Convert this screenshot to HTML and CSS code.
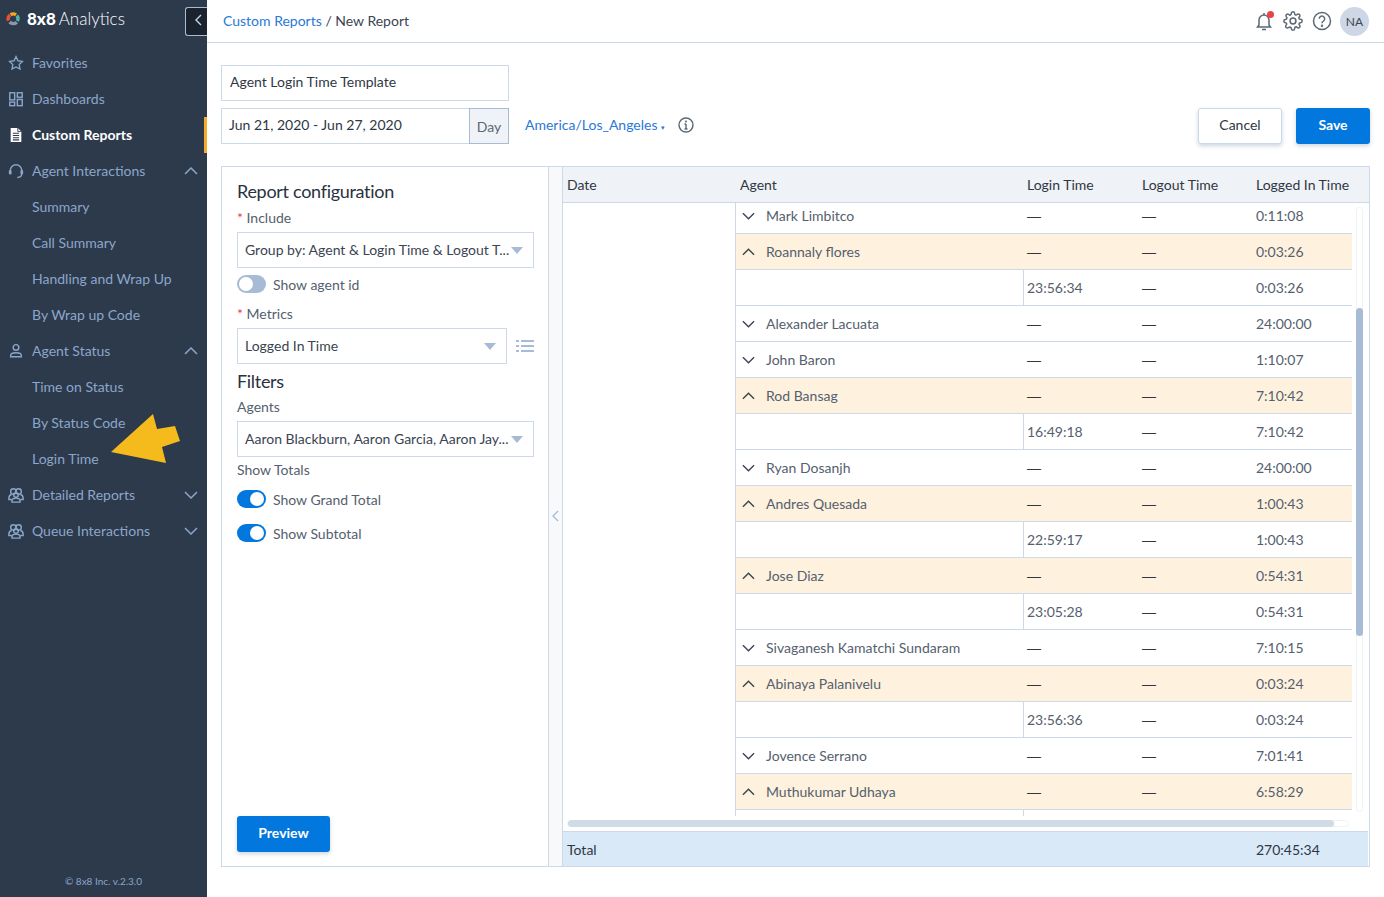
FILE: index.html
```html
<!DOCTYPE html>
<html lang="en">
<head>
  <meta charset="UTF-8" />
  <title>8x8 Analytics - New Report</title>
  <link rel="stylesheet" href="styles.css">
</head>
<body>
  <svg class="sprites" width="0" height="0">
    <symbol id="down" viewBox="0 0 14 8"><path d="M1 1l6 6 6-6" fill="none" stroke="currentColor" stroke-width="1.5"/></symbol>
    <symbol id="up" viewBox="0 0 14 8"><path d="M1 7l6-6 6 6" fill="none" stroke="currentColor" stroke-width="1.5"/></symbol>
    <symbol id="group" viewBox="0 0 18 18">
      <g fill="none" stroke="currentColor" stroke-width="1.6">
        <circle cx="6" cy="5" r="3"/><circle cx="12" cy="5" r="3"/><circle cx="9" cy="9" r="2.6"/>
        <path d="M4 8.500c-2 .6-3 2-3 4v1.500h3M14 8.500c2 .6 3 2 3 4v1.500h-3M4.500 17v-1.500c0-2 2-3 4.500-3s4.500 1 4.500 3V17z"/>
      </g>
    </symbol>
  </svg>

  <!-- Left navigation -->
  <aside class="sidebar">
    <div class="brand">
      <div class="logo">
        <svg width="14" height="14" viewBox="0 0 14 14" fill="none" stroke-width="3.400">
          <path d="M2.400 8.600a5 5 0 0 1 1.600-5.500" stroke="#e8503a"/>
          <path d="M4.500 2.700a5 5 0 0 1 5.500.2" stroke="#f5a623"/>
          <path d="M10.800 3.600a5 5 0 0 1 .6 5.400" stroke="#4db6ac"/>
          <path d="M10.800 10.200a5 5 0 0 1-7.200-.2" stroke="#8a97a8"/>
        </svg>
        <b>8x8</b> <span>Analytics</span>
      </div>
      <button class="collapse-nav"><svg width="7" height="12" viewBox="0 0 7 12"><path d="M6 1L1 6l5 5" fill="none" stroke="#c6d3e4" stroke-width="1.400"/></svg></button>
    </div>
    <nav class="nav">
      <a class="nav-item"><svg class="nav-icon" viewBox="0 0 18 18"><path d="M9 1.800l2.200 4.700 5 .7-3.600 3.500.9 5.100L9 13.400l-4.500 2.400.9-5.100L1.800 7.200l5-.7z" fill="none" stroke="currentColor" stroke-width="1.500"/></svg>Favorites</a>
      <a class="nav-item"><svg class="nav-icon" viewBox="0 0 18 18"><g fill="none" stroke="currentColor" stroke-width="1.600"><rect x="2" y="2" width="5.500" height="8"/><rect x="10.500" y="2" width="5.500" height="5"/><rect x="2" y="12.500" width="5.500" height="4"/><rect x="10.500" y="9.500" width="5.500" height="7"/></g></svg>Dashboards</a>
      <a class="nav-item active"><svg class="nav-icon" viewBox="0 0 18 18"><path d="M3 1h8l4 4v12H3z" fill="#fff"/><path d="M5.500 7h7M5.500 9.500h7M5.500 12h7M5.500 14.500h7" stroke="#2c3a4c" stroke-width="1.200"/><path d="M11 1v4h4" fill="none" stroke="#2c3a4c"/></svg>Custom Reports</a>
      <a class="nav-item"><svg class="nav-icon" viewBox="0 0 18 18"><g fill="none" stroke="currentColor" stroke-width="1.600"><path d="M2.500 11V8.500a6.500 6.500 0 0 1 13 0V11"/><path d="M15.500 12c0 3-2 4-5 4.300"/></g><rect x="1" y="8" width="3" height="5" rx="1.400" fill="currentColor"/><rect x="14" y="8" width="3" height="5" rx="1.400" fill="currentColor"/></svg>Agent Interactions<svg class="nav-chevron"><use href="#up"/></svg></a>
      <a class="nav-item sub">Summary</a>
      <a class="nav-item sub">Call Summary</a>
      <a class="nav-item sub">Handling and Wrap Up</a>
      <a class="nav-item sub">By Wrap up Code</a>
      <a class="nav-item"><svg class="nav-icon" viewBox="0 0 18 18"><g fill="none" stroke="currentColor" stroke-width="1.600"><circle cx="9" cy="5" r="3.200"/><path d="M3 15.500v-1.500c0-2 2.500-3 6-3s6 1 6 3v1.500z"/></g></svg>Agent Status<svg class="nav-chevron"><use href="#up"/></svg></a>
      <a class="nav-item sub">Time on Status</a>
      <a class="nav-item sub">By Status Code</a>
      <a class="nav-item sub">Login Time</a>
      <a class="nav-item"><svg class="nav-icon"><use href="#group"/></svg>Detailed Reports<svg class="nav-chevron"><use href="#down"/></svg></a>
      <a class="nav-item"><svg class="nav-icon"><use href="#group"/></svg>Queue Interactions<svg class="nav-chevron"><use href="#down"/></svg></a>
    </nav>
    <div class="copyright">© 8x8 Inc. v.2.3.0</div>
    <svg class="pointer" width="90" height="60" viewBox="0 0 90 60"><path d="M11 42L53 4l4 15 18-3 5 15-18 6 4 16z" fill="#f5bb1d"/></svg>
  </aside>

  <div class="page">
    <header class="topbar">
      <div class="crumbs"><a>Custom Reports</a> / New Report</div>
      <div class="top-icons">
        <span class="bell">
          <svg width="20" height="20" viewBox="0 0 20 20"><path d="M5 14V9a5 5 0 0 1 10 0v5l1.500 2h-13zM8 18.500h4M10 2v2" fill="none" stroke="#5b6875" stroke-width="1.500"/></svg>
          <i class="dot"></i>
        </span>
        <svg width="20" height="20" viewBox="0 0 24 24" fill="none" stroke="#5b6875" stroke-width="1.800"><circle cx="12" cy="12" r="3.500"/><path d="M19.400 15a1.650 1.650 0 0 0 .33 1.820l.06.06a2 2 0 1 1-2.830 2.830l-.06-.06a1.650 1.650 0 0 0-2.900 1.170V21a2 2 0 1 1-4 0v-.09A1.650 1.650 0 0 0 7.180 19.800l-.6.06a2 2 0 1 1-2.830-2.830l.06-.06a1.650 1.650 0 0 0-1.170-2.900H3a2 2 0 1 1 0-4h.09A1.650 1.650 0 0 0 4.200 7.180l-.06-.06a2 2 0 1 1 2.830-2.830l.06.06a1.650 1.650 0 0 0 2.900-1.170V3a2 2 0 1 1 4 0v.09a1.650 1.650 0 0 0 2.900 1.170l.06-.06a2 2 0 1 1 2.830 2.830l-.06.06a1.650 1.650 0 0 0 1.170 2.900H21a2 2 0 1 1 0 4h-.09a1.650 1.650 0 0 0-1.510 1z"/></svg>
        <svg width="20" height="20" viewBox="0 0 20 20" fill="none" stroke="#5b6875" stroke-width="1.500"><circle cx="10" cy="10" r="8.500"/><path d="M7.300 7.800a2.700 2.700 0 1 1 4.200 2.200c-1 .7-1.500 1.100-1.500 2.200"/><circle cx="10" cy="14.700" r=".5"/></svg>
        <span class="avatar">NA</span>
      </div>
    </header>

    <main class="content">
      <div class="toolbar">
        <div class="inputs">
          <div class="field">Agent Login Time Template</div>
          <div class="field date-field">
            <span class="date-text">Jun 21, 2020 - Jun 27, 2020</span>
            <span class="addon">Day</span>
          </div>
        </div>
        <div class="tz-row">
          <a class="tz">America/Los_Angeles <small>▾</small></a>
          <svg width="16" height="16" viewBox="0 0 16 16" fill="none" stroke="#5b6875" stroke-width="1.400"><circle cx="8" cy="8" r="7"/><path d="M8 7v5M6.500 12h3M6.500 7H8"/><circle cx="8" cy="4.500" r=".4"/></svg>
          <div class="actions">
            <button class="btn btn-default">Cancel</button>
            <button class="btn btn-primary">Save</button>
          </div>
        </div>
      </div>

      <section class="report">
        <div class="config">
          <h2 class="section-title">Report configuration</h2>
          <label class="label"><em>*</em> Include</label>
          <div class="select">Group by: Agent &amp; Login Time &amp; Logout T...<i class="caret"></i></div>
          <div class="switch-row first"><span class="switch"></span>Show agent id</div>
          <label class="label metrics"><em>*</em> Metrics</label>
          <div class="metrics-row">
            <div class="select">Logged In Time<i class="caret"></i></div>
            <svg width="18" height="14" viewBox="0 0 18 14" stroke="#a8bbd6" stroke-width="2"><path d="M0 2h3M5 2h13M0 7h3M5 7h13M0 12h3M5 12h13"/></svg>
          </div>
          <h2 class="section-title filters">Filters</h2>
          <label class="label agents">Agents</label>
          <div class="select">Aaron Blackburn, Aaron Garcia, Aaron Jay...<i class="caret"></i></div>
          <div class="label totals">Show Totals</div>
          <div class="switch-row grand"><span class="switch on"></span>Show Grand Total</div>
          <div class="switch-row"><span class="switch on"></span>Show Subtotal</div>
          <button class="btn btn-primary preview">Preview</button>
        </div>

        <div class="splitter"><svg width="7" height="12" viewBox="0 0 7 12"><path d="M6 1L1 6l5 5" fill="none" stroke="#a8bbd6" stroke-width="1.300"/></svg></div>

        <div class="grid">
          <div class="grid-head">
            <span class="col-date">Date</span>
            <span class="col-agent">Agent</span>
            <span class="col-login">Login Time</span>
            <span class="col-logout">Logout Time</span>
            <span class="col-logged">Logged In Time</span>
          </div>
          <div class="grid-body">
            <div class="date-col"></div>
            <div class="rows">
              <div class="row"><span class="col-agent"><svg class="chev"><use href="#down"/></svg>Mark Limbitco</span><span class="col-login dash">—</span><span class="col-logout dash">—</span><span class="col-logged">0:11:08</span></div>
              <div class="row open"><span class="col-agent"><svg class="chev"><use href="#up"/></svg>Roannaly flores</span><span class="col-login dash">—</span><span class="col-logout dash">—</span><span class="col-logged">0:03:26</span></div>
              <div class="row child"><span class="col-agent"></span><span class="col-login">23:56:34</span><span class="col-logout dash">—</span><span class="col-logged">0:03:26</span></div>
              <div class="row"><span class="col-agent"><svg class="chev"><use href="#down"/></svg>Alexander Lacuata</span><span class="col-login dash">—</span><span class="col-logout dash">—</span><span class="col-logged">24:00:00</span></div>
              <div class="row"><span class="col-agent"><svg class="chev"><use href="#down"/></svg>John Baron</span><span class="col-login dash">—</span><span class="col-logout dash">—</span><span class="col-logged">1:10:07</span></div>
              <div class="row open"><span class="col-agent"><svg class="chev"><use href="#up"/></svg>Rod Bansag</span><span class="col-login dash">—</span><span class="col-logout dash">—</span><span class="col-logged">7:10:42</span></div>
              <div class="row child"><span class="col-agent"></span><span class="col-login">16:49:18</span><span class="col-logout dash">—</span><span class="col-logged">7:10:42</span></div>
              <div class="row"><span class="col-agent"><svg class="chev"><use href="#down"/></svg>Ryan Dosanjh</span><span class="col-login dash">—</span><span class="col-logout dash">—</span><span class="col-logged">24:00:00</span></div>
              <div class="row open"><span class="col-agent"><svg class="chev"><use href="#up"/></svg>Andres Quesada</span><span class="col-login dash">—</span><span class="col-logout dash">—</span><span class="col-logged">1:00:43</span></div>
              <div class="row child"><span class="col-agent"></span><span class="col-login">22:59:17</span><span class="col-logout dash">—</span><span class="col-logged">1:00:43</span></div>
              <div class="row open"><span class="col-agent"><svg class="chev"><use href="#up"/></svg>Jose Diaz</span><span class="col-login dash">—</span><span class="col-logout dash">—</span><span class="col-logged">0:54:31</span></div>
              <div class="row child"><span class="col-agent"></span><span class="col-login">23:05:28</span><span class="col-logout dash">—</span><span class="col-logged">0:54:31</span></div>
              <div class="row"><span class="col-agent"><svg class="chev"><use href="#down"/></svg>Sivaganesh Kamatchi Sundaram</span><span class="col-login dash">—</span><span class="col-logout dash">—</span><span class="col-logged">7:10:15</span></div>
              <div class="row open"><span class="col-agent"><svg class="chev"><use href="#up"/></svg>Abinaya Palanivelu</span><span class="col-login dash">—</span><span class="col-logout dash">—</span><span class="col-logged">0:03:24</span></div>
              <div class="row child"><span class="col-agent"></span><span class="col-login">23:56:36</span><span class="col-logout dash">—</span><span class="col-logged">0:03:24</span></div>
              <div class="row"><span class="col-agent"><svg class="chev"><use href="#down"/></svg>Jovence Serrano</span><span class="col-login dash">—</span><span class="col-logout dash">—</span><span class="col-logged">7:01:41</span></div>
              <div class="row open"><span class="col-agent"><svg class="chev"><use href="#up"/></svg>Muthukumar Udhaya</span><span class="col-login dash">—</span><span class="col-logout dash">—</span><span class="col-logged">6:58:29</span></div>
              <div class="row child"><span class="col-agent"></span><span class="col-login"></span><span class="col-logout"></span><span class="col-logged"></span></div>
            </div>
            <div class="v-scroll"><div class="v-track"><div class="v-thumb"></div></div></div>
          </div>
          <div class="h-scroll"><div class="h-track"><div class="h-thumb"></div></div></div>
          <div class="grid-total">
            <span class="total-label">Total</span>
            <span class="col-logged">270:45:34</span>
          </div>
        </div>
      </section>
    </main>
  </div>
</body>
</html>
```

FILE: styles.css
```css
* {
  box-sizing: border-box;
}
body {
  margin: 0;
  height: 897px;
  display: flex;
  overflow: hidden;
  font-family: 'Lato', 'Noto Sans', sans-serif;
  font-size: 14px;
  color: #3a4452;
  background-color: #fff;
}
.sprites {
  position: absolute;
}

/* Sidebar */
.sidebar {
  position: relative;
  flex: 0 0 207px;
  display: flex;
  flex-direction: column;
  background-color: #2c3a4c;
  color: #8ca6c9;
}
.brand {
  height: 45px;
  display: flex;
  justify-content: space-between;
  padding-left: 6px;
}
.logo {
  display: flex;
  align-items: center;
  height: 37px;
  font-size: 17px;
  color: #fff;
}
.logo svg {
  margin-right: 7px;
}
.logo b {
  margin-right: 3px;
  font-weight: 900;
}
.logo span {
  font-weight: 300;
}
.collapse-nav {
  align-self: flex-start;
  width: 22px;
  height: 29px;
  margin-top: 7px;
  padding: 0 0 0 3px;
  background-color: #1b232e;
  border: 1px solid #a8bbd6;
  border-right: none;
  border-radius: 3px 0 0 3px;
}
.nav {
  flex: 1;
}
.nav-item {
  height: 36px;
  display: flex;
  align-items: center;
  padding: 0 9px 2px 8px;
}
.nav-item.sub {
  padding-left: 32px;
}
.nav-item.active {
  color: #fff;
  font-weight: 700;
  border-right: 3px solid #f5ac2b;
}
.nav-icon {
  width: 16px;
  height: 16px;
  margin: 2px 8px 0 0;
  flex: none;
}
.nav-chevron {
  width: 14px;
  height: 8px;
  margin: 2px 0 0 auto;
}
.copyright {
  height: 22px;
  text-align: center;
  font-size: 10px;
}
.pointer {
  position: absolute;
  left: 100px;
  top: 410px;
}

/* Top bar */
.page {
  flex: 1;
  min-width: 0;
  display: flex;
  flex-direction: column;
}
.topbar {
  height: 43px;
  flex: none;
  display: flex;
  align-items: center;
  justify-content: space-between;
  padding: 0 15px 0 16px;
  border-bottom: 1px solid #cdd9e8;
}
.crumbs {
  padding-bottom: 2px;
}
.crumbs a, .tz {
  color: #2a78d8;
}
.top-icons {
  display: flex;
  align-items: center;
  gap: 9px;
}
.top-icons svg {
  display: block;
}
.bell {
  position: relative;
}
.dot {
  position: absolute;
  top: 0;
  right: 0;
  width: 7px;
  height: 7px;
  border-radius: 50%;
  background-color: #e8424a;
}
.avatar {
  width: 29px;
  height: 29px;
  margin-left: -1px;
  display: flex;
  align-items: center;
  justify-content: center;
  border-radius: 50%;
  background-color: #cdd7e5;
  font-size: 12px;
}

/* Title, date range and actions */
.content {
  flex: 1;
  min-height: 0;
  display: flex;
  flex-direction: column;
  padding: 22px 14px 30px;
}
.toolbar {
  display: flex;
  height: 79px;
  flex: none;
}
.inputs {
  width: 288px;
  display: flex;
  flex-direction: column;
  gap: 7px;
}
.field {
  height: 36px;
  display: flex;
  align-items: center;
  padding: 0 0 3px 8px;
  border: 1px solid #cdd9e8;
  color: #2f3744;
}
.date-field {
  padding: 0 0 0 7px;
}
.date-text {
  flex: 1;
  padding-bottom: 3px;
}
.addon {
  width: 40px;
  height: 36px;
  margin: 0 -1px 0 0;
  display: flex;
  align-items: center;
  justify-content: center;
  background-color: #eff2f7;
  border: 1px solid #a8bbd6;
  color: #5b6875;
}
.tz-row {
  flex: 1;
  display: flex;
  align-items: center;
  align-self: flex-end;
  height: 36px;
  padding-left: 16px;
}
.tz {
  margin: 0 13px 3px 0;
}
.tz small {
  font-size: 7px;
}
.tz-row > svg {
  margin-bottom: 2px;
}
.actions {
  margin-left: auto;
  display: flex;
  gap: 14px;
}
.btn {
  height: 36px;
  padding: 0 0 3px;
  border-radius: 3px;
  font: inherit;
}
.btn-default {
  width: 84px;
  background-color: #fff;
  border: 1px solid #cdd9e8;
  box-shadow: 0 2px 4px rgba(90, 115, 150, 0.3);
  color: #2f3744;
}
.btn-primary {
  width: 74px;
  background-color: #0277dd;
  border: none;
  color: #fff;
  font-weight: 700;
  box-shadow: 0 2px 4px rgba(90, 115, 150, 0.3);
}

/* Report panel */
.report {
  flex: 1;
  min-height: 0;
  margin-top: 22px;
  display: flex;
  border: 1px solid #cdd9e8;
}
.config {
  flex: 0 0 326px;
  display: flex;
  flex-direction: column;
  padding: 12px 14px 14px 15px;
}
.section-title {
  margin: 0;
  height: 24px;
  line-height: 24px;
  font-size: 18px;
  letter-spacing: -0.3px;
  font-weight: 400;
  color: #2a323e;
}
.section-title.filters {
  margin-top: 5px;
}
.label {
  height: 20px;
  line-height: 20px;
  margin-top: 5px;
  color: #55606e;
}
.label em {
  color: #e8424a;
  font-style: normal;
}
.label.metrics {
  margin-top: 11px;
}
.label.agents {
  margin-top: 4px;
}
.label.totals {
  margin-top: 3px;
}
.select {
  position: relative;
  flex: none;
  height: 36px;
  margin-top: 4px;
  display: flex;
  align-items: center;
  padding: 0 0 2px 7px;
  border: 1px solid #cdd9e8;
  color: #3a4452;
  white-space: nowrap;
}
.caret {
  position: absolute;
  right: 10px;
  top: 14px;
  border-left: 6px solid transparent;
  border-right: 6px solid transparent;
  border-top: 7px solid #a8bbd6;
}
.metrics-row {
  display: flex;
  align-items: center;
  gap: 9px;
}
.metrics-row .select {
  flex: 1;
}
.metrics-row svg {
  margin-top: 4px;
}
.switch-row {
  height: 18px;
  margin-top: 16px;
  display: flex;
  align-items: center;
  gap: 7px;
  color: #55606e;
}
.switch-row.first {
  margin-top: 7px;
}
.switch-row.grand {
  margin-top: 10px;
}
.switch {
  position: relative;
  width: 29px;
  height: 18px;
  border-radius: 9px;
  background-color: #a8bbd6;
}
.switch::after {
  content: '';
  position: absolute;
  top: 2px;
  left: 2px;
  width: 14px;
  height: 14px;
  border-radius: 50%;
  background-color: #fff;
}
.switch.on {
  background-color: #0277dd;
}
.switch.on::after {
  left: 13px;
}
.preview {
  width: 93px;
  margin-top: auto;
}
.splitter {
  flex: 0 0 15px;
  display: flex;
  align-items: center;
  justify-content: center;
  padding-bottom: 2px;
  background-color: #f8f9fb;
  border-left: 1px solid #cdd9e8;
  border-right: 1px solid #cdd9e8;
}

/* Data grid */
.grid {
  flex: 1;
  min-width: 0;
  display: flex;
  flex-direction: column;
}
.grid-head {
  height: 36px;
  flex: none;
  display: flex;
  align-items: center;
  background-color: #eff2f7;
  border-bottom: 1px solid #cdd9e8;
  color: #2f3744;
}
.col-date {
  width: 173px;
  padding-left: 4px;
}
.col-agent {
  width: 287px;
  padding-left: 4px;
  display: flex;
  align-items: center;
}
.col-login {
  width: 115px;
  padding-left: 4px;
}
.col-logout {
  width: 114px;
  padding-left: 4px;
}
.col-logged {
  width: 100px;
  padding-left: 4px;
  white-space: nowrap;
}
.dash {
  font-family: 'Liberation Sans', sans-serif;
  color: #2f3744;
}
.grid-body {
  flex: 1;
  min-height: 0;
  display: flex;
  overflow: hidden;
}
.date-col {
  flex: 0 0 173px;
  border-right: 1px solid #cdd9e8;
}
.rows {
  flex: 0 0 616px;
  margin-top: -5px;
}
.row {
  height: 36px;
  display: flex;
  align-items: center;
  border-bottom: 1px solid #cdd9e8;
  color: #55606e;
}
.row.open {
  background-color: #fef2df;
}
.row.child .col-login {
  height: 100%;
  display: flex;
  align-items: center;
  border-left: 1px solid #cdd9e8;
  padding-left: 3px;
}
.chev {
  width: 13px;
  height: 8px;
  margin: 0 11px 0 2px;
  color: #3a4452;
}
.v-scroll {
  flex: 1;
  padding: 4px 5px 4px 4px;
}
.v-track {
  width: 7px;
  height: 100%;
  border: 1px solid #eff2f7;
  border-radius: 4px;
  padding-top: 100px;
}
.v-thumb {
  width: 7px;
  height: 328px;
  margin-left: -1px;
  border-radius: 4px;
  background-color: #a8bbd6;
}
.h-scroll {
  height: 15px;
  flex: none;
  padding: 4px 20px 4px 4px;
}
.h-track {
  height: 7px;
  border: 1px solid #eff2f7;
  border-radius: 4px;
}
.h-thumb {
  width: 766px;
  height: 7px;
  margin-top: -1px;
  border-radius: 4px;
  background-color: #d0dbe8;
}
.grid-total {
  height: 35px;
  flex: none;
  display: flex;
  align-items: center;
  margin-right: 1px;
  background-color: #d9e9f8;
  border-top: 1px solid #cdd9e8;
  color: #2f3744;
}
.total-label {
  width: 689px;
  padding-left: 4px;
}
```
